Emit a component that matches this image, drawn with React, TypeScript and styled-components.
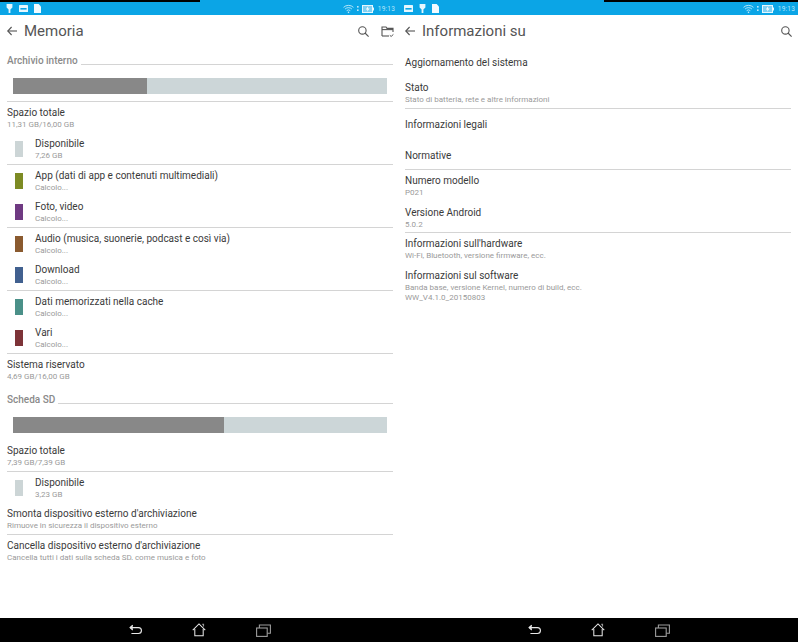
import React from "react";
import styled, { createGlobalStyle } from "styled-components";

const GlobalStyle = createGlobalStyle`
  html, body {
    margin: 0;
    padding: 0;
    background: #fff;
    font-family: Roboto, "Liberation Sans", sans-serif;
  }
`;

const Screen = styled.div`
  width: 798px;
  height: 642px;
  display: grid;
  grid-template-columns: 398px 400px;
  overflow: hidden;
`;

const Pane = styled.div`
  display: flex;
  flex-direction: column;
  height: 642px;
`;

const StatusBar = styled.div`
  position: relative;
  height: 15px;
  flex-shrink: 0;
  display: flex;
  align-items: center;
  justify-content: space-between;
  padding: 2px 3px 0 6px;
  box-sizing: border-box;
  background: #0ba5e6;
`;

const Notch = styled.div<{ $side: "left" | "right"; $width: number }>`
  position: absolute;
  top: 0;
  ${({ $side }) => $side}: 0;
  width: ${({ $width }) => $width}px;
  height: 2px;
  background: #000;
`;

const StatusGroup = styled.div<{ $gap: number }>`
  display: flex;
  align-items: center;
  gap: ${({ $gap }) => $gap}px;
`;

const Clock = styled.span`
  font-size: 6.5px;
  color: #b9e6fa;
  letter-spacing: 0.2px;
  margin-left: 1px;
`;

const TitleBar = styled.div<{ $inset: number }>`
  height: 32px;
  flex-shrink: 0;
  display: flex;
  align-items: center;
  padding: 0 ${({ $inset }) => $inset}px 0 7px;
  gap: 7px;
  color: #555;
`;

const Title = styled.h1`
  flex: 1;
  margin: 0;
  font-size: 15px;
  font-weight: 400;
  color: #555;
`;

const Actions = styled.div`
  display: flex;
  align-items: center;
  gap: 12px;
`;

const Body = styled.div<{ $inset: number }>`
  height: 513px;
  flex-shrink: 0;
  overflow: hidden;
  padding: 0 ${({ $inset }) => $inset}px 0 7px;
`;

const SectionHeading = styled.div<{ $top: number }>`
  display: flex;
  padding-top: ${({ $top }) => $top}px;
  gap: 3px;
`;

const SectionLabel = styled.span`
  font-size: 10px;
  line-height: 12px;
  font-weight: 500;
  color: #8a8a8a;
`;

const SectionLine = styled.span`
  flex: 1;
  height: 1px;
  margin-top: 9px;
  background: #d4d4d4;
`;

const UsageWrap = styled.div<{ $divider?: boolean }>`
  padding: 11px 6px 6.6px;
  border-bottom: 1px solid ${({ $divider }) => ($divider ? "#d4d4d4" : "transparent")};
`;

const UsageTrack = styled.div`
  height: 16px;
  background: #ccd6d8;
`;

const UsageFill = styled.div<{ $percent: number }>`
  height: 100%;
  width: ${({ $percent }) => $percent}%;
  background: #888;
`;

const Row = styled.div<{ $height?: number; $divider?: boolean; $centered?: boolean }>`
  height: ${({ $height }) => $height ?? 31.5}px;
  box-sizing: border-box;
  display: flex;
  align-items: ${({ $centered }) => ($centered ? "center" : "flex-start")};
  padding-top: ${({ $centered }) => ($centered ? 2 : 5)}px;
  border-bottom: 1px solid ${({ $divider }) => ($divider ? "#d4d4d4" : "transparent")};
`;

const Swatch = styled.span<{ $color: string }>`
  width: 8px;
  height: 16px;
  margin: 3px 12px 0 8px;
  flex-shrink: 0;
  background: ${({ $color }) => $color};
`;

const RowText = styled.div`
  display: flex;
  flex-direction: column;
  min-width: 0;
`;

const RowTitle = styled.span`
  font-size: 10px;
  line-height: 12px;
  color: #3a3a3a;
  white-space: nowrap;
`;

const RowSub = styled.span`
  font-size: 8px;
  line-height: 12px;
  color: #9a9a9a;
  white-space: nowrap;
`;

const RowExtra = styled.span`
  font-size: 8px;
  line-height: 9px;
  margin-top: -1px;
  color: #9a9a9a;
  white-space: nowrap;
`;

const Spacer = styled.div`
  flex: 1;
  background: #fff;
`;

const NavBar = styled.div`
  height: 24px;
  flex-shrink: 0;
  display: flex;
  align-items: center;
  justify-content: center;
  background: #000;
`;

const NavButton = styled.div`
  width: 64px;
  display: flex;
  justify-content: center;
`;

const BackArrow = () => (
  <svg width="10" height="10" viewBox="0 0 10 10" fill="none" stroke="#555" strokeWidth="1.1">
    <path d="M10 5H.8" />
    <path d="M4.6 1L.8 5l3.8 4" />
  </svg>
);

const SearchIcon = () => (
  <svg width="11" height="11" viewBox="0 0 11 11" fill="none" stroke="#555" strokeWidth="1.1">
    <circle cx="4.4" cy="4.4" r="3.7" />
    <path d="M7 7l3.6 3.6" />
  </svg>
);

const FolderIcon = () => (
  <svg width="13" height="13" viewBox="0 0 13 13" fill="none" stroke="#555" strokeWidth="1.1">
    <path d="M1 11V2h4l1 1.4h6V7" />
    <path d="M1 11h7" />
    <path d="M1 4.6h11" />
    <path d="M8.8 10.4l1.4 1 2.2-2" strokeWidth="1" />
  </svg>
);

const PinIcon = () => (
  <svg width="7" height="9" viewBox="0 0 7 9" fill="#e6f7fe">
    <path d="M.6 0h5.8v3.6L4.4 5.6V9H2.6V5.6L.6 3.6z" />
  </svg>
);

const CardIcon = () => (
  <svg width="9" height="7" viewBox="0 0 9 7">
    <rect width="9" height="7" rx="0.6" fill="#e6f7fe" />
    <rect x="1.4" y="3" width="6.2" height="1.6" fill="#0ba5e6" />
  </svg>
);

const DocIcon = () => (
  <svg width="7" height="9" viewBox="0 0 7 9" fill="#f2fbff">
    <path d="M0 0h4.6L7 2.4V9H0z" />
  </svg>
);

const WifiIcon = () => (
  <svg width="11" height="10" viewBox="0 0 12 10" fill="none" stroke="#d7f2fd" strokeWidth="0.9">
    <path d="M.6 3.2a7.8 7.8 0 0 1 10.8 0" />
    <path d="M2.3 5a5.4 5.4 0 0 1 7.4 0" />
    <path d="M4 6.8a3 3 0 0 1 4 0" />
    <path d="M6 9.6L4.9 8.3a1.6 1.6 0 0 1 2.2 0z" fill="#d7f2fd" stroke="none" />
  </svg>
);

const SignalDots = () => (
  <svg width="2" height="7" viewBox="0 0 2 7" fill="#bfe8fa">
    <rect y="1" width="1.6" height="1.6" />
    <rect y="4.4" width="1.6" height="1.6" />
  </svg>
);

const BatteryIcon = () => (
  <svg width="12" height="8" viewBox="0 0 12 8">
    <rect x="0.5" y="0.5" width="10" height="7" fill="#7fd0f2" stroke="#e6f7fe" />
    <rect x="11" y="2.5" width="1" height="3" fill="#e6f7fe" />
    <path d="M6.4 1L3.8 4.4h1.8L4.8 7l2.8-3.6H5.8z" fill="#fff" />
  </svg>
);

const BackIcon = () => (
  <svg width="13" height="13" viewBox="0 0 14 13" fill="none" stroke="#e8e8e8" strokeWidth="1.2">
    <path d="M1 3.4h9.2a2.9 2.9 0 0 1 0 6.4H2.6" />
    <path d="M4 .8L1.2 3.4 4 6" fill="#e8e8e8" />
  </svg>
);

const HomeIcon = () => (
  <svg width="14" height="14" viewBox="0 0 15 15" fill="none" stroke="#e8e8e8" strokeWidth="1.1">
    <path d="M.8 7.6L7.5 1l6.7 6.6" />
    <path d="M3 6.4v7.2h9V6.4" />
    <path d="M11 1.4h1.4v2.4" fill="#999" stroke="#999" />
  </svg>
);

const RecentsIcon = () => (
  <svg width="15" height="13" viewBox="0 0 15 13" fill="none" stroke="#9c9c9c" strokeWidth="1.1">
    <rect x="0.6" y="4" width="10.6" height="8.4" />
    <path d="M3.4 4V1h11v8.2h-3.2" />
  </svg>
);

const PaneStatus = ({ notch, left }: { notch: "left" | "right"; left: React.ReactNode }) => (
  <StatusBar>
    <Notch $side={notch} $width={notch === "left" ? 200 : 194} />
    <StatusGroup $gap={6}>{left}</StatusGroup>
    <StatusGroup $gap={3}>
      <WifiIcon />
      <SignalDots />
      <BatteryIcon />
      <Clock>19:13</Clock>
    </StatusGroup>
  </StatusBar>
);

const Navigation = () => (
  <NavBar>
    <NavButton><BackIcon /></NavButton>
    <NavButton><HomeIcon /></NavButton>
    <NavButton><RecentsIcon /></NavButton>
  </NavBar>
);

const Usage = ({ percent, divider }: { percent: number; divider?: boolean }) => (
  <UsageWrap $divider={divider}>
    <UsageTrack>
      <UsageFill $percent={percent} />
    </UsageTrack>
  </UsageWrap>
);

const Heading = ({ label, top }: { label: string; top: number }) => (
  <SectionHeading $top={top}>
    <SectionLabel>{label}</SectionLabel>
    <SectionLine />
  </SectionHeading>
);

type Item = { title: string; sub?: string; color?: string; divider?: boolean };

const internalItems: Item[] = [
  { title: "Spazio totale", sub: "11,31 GB/16,00 GB" },
  { title: "Disponibile", sub: "7,26 GB", color: "#ccd5d6", divider: true },
  { title: "App (dati di app e contenuti multimediali)", sub: "Calcolo...", color: "#7d8b24" },
  { title: "Foto, video", sub: "Calcolo...", color: "#6f3a82", divider: true },
  { title: "Audio (musica, suonerie, podcast e così via)", sub: "Calcolo...", color: "#8a5a2f" },
  { title: "Download", sub: "Calcolo...", color: "#41608f", divider: true },
  { title: "Dati memorizzati nella cache", sub: "Calcolo...", color: "#4a9088" },
  { title: "Vari", sub: "Calcolo...", color: "#7d3338", divider: true },
  { title: "Sistema riservato", sub: "4,69 GB/16,00 GB" },
];

const sdItems: Item[] = [
  { title: "Spazio totale", sub: "7,39 GB/7,39 GB", divider: true },
  { title: "Disponibile", sub: "3,23 GB", color: "#ccd5d6" },
  { title: "Smonta dispositivo esterno d'archiviazione", sub: "Rimuove in sicurezza il dispositivo esterno", divider: true },
  { title: "Cancella dispositivo esterno d'archiviazione", sub: "Cancella tutti i dati sulla scheda SD, come musica e foto" },
];

const ListRow = ({ item }: { item: Item }) => (
  <Row $divider={item.divider}>
    {item.color && <Swatch $color={item.color} />}
    <RowText>
      <RowTitle>{item.title}</RowTitle>
      {item.sub && <RowSub>{item.sub}</RowSub>}
    </RowText>
  </Row>
);

const MemoryPane = () => (
  <Pane>
    <PaneStatus
      notch="left"
      left={
        <>
          <PinIcon />
          <CardIcon />
          <DocIcon />
        </>
      }
    />
    <TitleBar $inset={4}>
      <BackArrow />
      <Title>Memoria</Title>
      <Actions>
        <SearchIcon />
        <FolderIcon />
      </Actions>
    </TitleBar>
    <Body $inset={5}>
      <Heading label="Archivio interno" top={8} />
      <Usage percent={35.8} divider />
      {internalItems.map((item) => (
        <ListRow key={item.title} item={item} />
      ))}
      <Heading label="Scheda SD" top={8.6} />
      <Usage percent={56.4} />
      {sdItems.map((item) => (
        <ListRow key={item.title} item={item} />
      ))}
    </Body>
    <Spacer />
    <Navigation />
  </Pane>
);

const AboutPane = () => (
  <Pane>
    <PaneStatus
      notch="right"
      left={
        <>
          <CardIcon />
          <PinIcon />
          <DocIcon />
        </>
      }
    />
    <TitleBar $inset={6}>
      <BackArrow />
      <Title>Informazioni su</Title>
      <Actions>
        <SearchIcon />
      </Actions>
    </TitleBar>
    <Body $inset={7}>
      <Row $height={30} $centered>
        <RowTitle>Aggiornamento del sistema</RowTitle>
      </Row>
      <ListRow item={{ title: "Stato", sub: "Stato di batteria, rete e altre informazioni", divider: true }} />
      <Row $centered>
        <RowTitle>Informazioni legali</RowTitle>
      </Row>
      <Row $height={30} $divider $centered>
        <RowTitle>Normative</RowTitle>
      </Row>
      <ListRow item={{ title: "Numero modello", sub: "P021" }} />
      <ListRow item={{ title: "Versione Android", sub: "5.0.2", divider: true }} />
      <ListRow item={{ title: "Informazioni sull'hardware", sub: "Wi-Fi, Bluetooth, versione firmware, ecc." }} />
      <Row>
        <RowText>
          <RowTitle>Informazioni sul software</RowTitle>
          <RowSub>Banda base, versione Kernel, numero di build, ecc.</RowSub>
          <RowExtra>WW_V4.1.0_20150803</RowExtra>
        </RowText>
      </Row>
    </Body>
    <Spacer />
    <Navigation />
  </Pane>
);

const App: React.FC = () => (
  <>
    <GlobalStyle />
    <Screen>
      <MemoryPane />
      <AboutPane />
    </Screen>
  </>
);

export default App;
